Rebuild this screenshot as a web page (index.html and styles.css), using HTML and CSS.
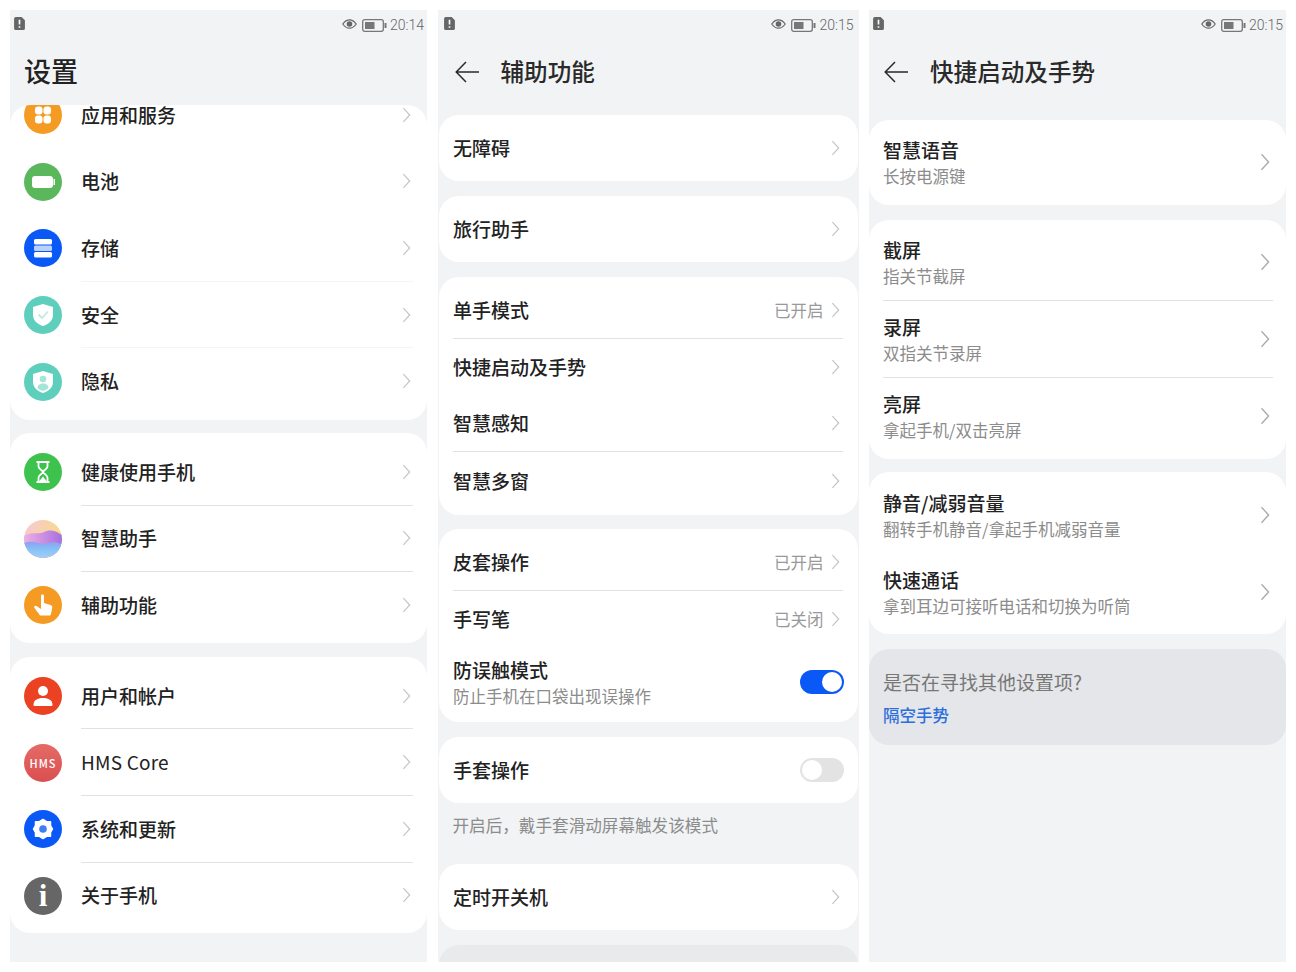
FILE: index.html
```html
<!DOCTYPE html>
<html lang="zh-CN">
<head>
<meta charset="utf-8">
<title>设置</title>
<link rel="stylesheet" href="styles.css">
</head>
<body>
<svg class="defs" width="0" height="0" aria-hidden="true">
  <symbol id="chev" viewBox="0 0 10 18"><path d="M1.5 1.2 8.6 9 1.5 16.8" fill="none" stroke="currentColor" stroke-width="1.3"/></symbol>
  <symbol id="back" viewBox="0 0 24 22"><path d="M24 11H1.2M11 1 1.2 11 11 21" fill="none" stroke="#2a2a2a" stroke-width="1.5"/></symbol>
  <symbol id="notice" viewBox="0 0 10 12"><path d="M1.5 0H7L10 3V10.5A1.5 1.5 0 0 1 8.500 12H1.500A1.500 1.500 0 0 1 0 10.500V1.500A1.500 1.500 0 0 1 1.500 0Z" fill="#666"/><path d="M5 2.500V7M5 8.500V10" stroke="#fff" stroke-width="1.500"/></symbol>
  <symbol id="eye" viewBox="0 0 15 10"><path d="M.8 5C3 1.800 5.200.8 7.500.8S12 1.800 14.200 5C12 8.200 9.800 9.200 7.500 9.200S3 8.200.8 5Z" fill="none" stroke="#666" stroke-width="1.200"/><circle cx="7.500" cy="5" r="2.800" fill="#666"/></symbol>
  <symbol id="batt" viewBox="0 0 25 13"><rect x=".7" y=".7" width="20.600" height="11.600" rx="2" fill="none" stroke="#777" stroke-width="1.300"/><rect x="3" y="3" width="9.500" height="7" fill="#777"/><rect x="22.500" y="4" width="2" height="5" fill="#777"/></symbol>
</svg>

<main class="screens">

  <section class="panel">
    <header class="head">
      <div class="status">
        <svg class="st-notice"><use href="#notice"/></svg>
        <span class="st-right">
          <svg class="st-eye"><use href="#eye"/></svg>
          <svg class="st-batt"><use href="#batt"/></svg>
          <span class="st-time">20:14</span>
        </span>
      </div>
      <div class="titlebar"><h1 class="title-main">设置</h1></div>
    </header>
    <div class="scroll scroll-round">
      <div class="list list-scrolled">
        <div class="card card-settings gap-13">
          <div class="row row-icon"><svg class="ico" viewBox="0 0 38 38"><circle cx="19" cy="19" r="19" fill="#f59b23"/><g fill="#fff"><rect x="11" y="10.500" width="7.500" height="8" rx="3"/><rect x="19.500" y="10.500" width="7.500" height="8" rx="3"/><rect x="11" y="19.500" width="7.500" height="8" rx="3"/><rect x="19.500" y="19.500" width="7.500" height="8" rx="3"/></g></svg><div class="main main-plain"><span class="label">应用和服务</span><svg class="chev"><use href="#chev"/></svg></div></div>
          <div class="row row-icon"><svg class="ico" viewBox="0 0 38 38"><circle cx="19" cy="19" r="19" fill="#5bb75c"/><rect x="8" y="13" width="21" height="12" rx="3" fill="#fff"/><rect x="29.500" y="16" width="1.500" height="6" fill="#fff"/></svg><div class="main main-plain"><span class="label">电池</span><svg class="chev"><use href="#chev"/></svg></div></div>
          <div class="row row-icon"><svg class="ico" viewBox="0 0 38 38"><circle cx="19" cy="19" r="19" fill="#0a59f7"/><rect x="10" y="10" width="18" height="5.500" rx="1.500" fill="#fff"/><rect x="10" y="16.500" width="18" height="5.500" rx="1.500" fill="#b9d2fb"/><rect x="10" y="23" width="18" height="5.500" rx="1.500" fill="#fff"/></svg><div class="main main-faint"><span class="label">存储</span><svg class="chev"><use href="#chev"/></svg></div></div>
          <div class="row row-icon"><svg class="ico" viewBox="0 0 38 38"><circle cx="19" cy="19" r="19" fill="#5fcfbd"/><path d="M19 8 29 11V19C29 24 25 28 19 30 13 28 9 24 9 19V11Z" fill="#fff"/><path d="M14.500 18.500 18 22 24 15.500" fill="none" stroke="#bfe9e1" stroke-width="1.800"/></svg><div class="main main-faint"><span class="label">安全</span><svg class="chev"><use href="#chev"/></svg></div></div>
          <div class="row row-icon"><svg class="ico" viewBox="0 0 38 38"><circle cx="19" cy="19" r="19" fill="#5fcfbd"/><path d="M19 8 29 11V19C29 24 25 28 19 30 13 28 9 24 9 19V11Z" fill="#fff"/><circle cx="19" cy="16" r="3.300" fill="#a5e4d9"/><path d="M13.500 25C14 21.500 16 20.500 19 20.500S24 21.500 24.500 25C22.500 26.800 20.500 27.500 19 28 17.500 27.500 15.500 26.800 13.500 25Z" fill="#a5e4d9"/></svg><div class="main main-plain"><span class="label">隐私</span><svg class="chev"><use href="#chev"/></svg></div></div>
        </div>
        <div class="card card-settings card-low gap-14">
          <div class="row row-icon"><svg class="ico" viewBox="0 0 38 38"><circle cx="19" cy="19" r="19" fill="#3dc24e"/><path d="M12.500 9H25.500M12.500 29H25.500M14.500 9.500V13.500C14.500 16 19 17.500 19 19S14.500 22 14.500 24.500V28.500M23.500 9.500V13.500C23.500 16 19 17.500 19 19S23.500 22 23.500 24.500V28.500" fill="none" stroke="#fff" stroke-width="1.800"/><path d="M15.500 28 19 23.500 22.500 28Z" fill="#fff"/></svg><div class="main main-line"><span class="label">健康使用手机</span><svg class="chev"><use href="#chev"/></svg></div></div>
          <div class="row row-icon"><svg class="ico" viewBox="0 0 38 38"><defs><linearGradient id="as-a" x1="0" y1="0" x2="1" y2="0.300"><stop offset="0" stop-color="#f6c9d6"/><stop offset="1" stop-color="#f8d98a"/></linearGradient><linearGradient id="as-b" x1="0" y1="0" x2="1" y2="0"><stop offset="0" stop-color="#eeb0e2"/><stop offset="1" stop-color="#a86fe0"/></linearGradient><linearGradient id="as-c" x1="0" y1="0" x2="0" y2="1"><stop offset="0" stop-color="#8f9ff0"/><stop offset=".5" stop-color="#85c4f6"/><stop offset="1" stop-color="#a5cdf5"/></linearGradient><clipPath id="as-clip"><circle cx="19" cy="19" r="19"/></clipPath></defs><g clip-path="url(#as-clip)"><rect width="38" height="38" fill="url(#as-a)"/><path d="M0 16C8 11 13 15 20 12S32 11 38 15V38H0Z" fill="url(#as-b)"/><path d="M0 23C10 19 16 26 25 23S34 25 38 23V38H0Z" fill="url(#as-c)"/></g></svg><div class="main main-line"><span class="label">智慧助手</span><svg class="chev"><use href="#chev"/></svg></div></div>
          <div class="row row-icon"><svg class="ico" viewBox="0 0 38 38"><circle cx="19" cy="19" r="19" fill="#f59b23"/><path d="M17 9.500C17 8 20 8 20 9.500V17L26.500 19C28 19.500 28.500 20.500 28.200 22L27 28C26.800 29 26 29.500 25 29.500H17C16 29.500 15.500 29 15 28L10.500 22C9.500 20.500 11 19 12.500 20L17 23Z" fill="#fff"/></svg><div class="main main-plain"><span class="label">辅助功能</span><svg class="chev"><use href="#chev"/></svg></div></div>
        </div>
        <div class="card card-settings card-low">
          <div class="row row-icon"><svg class="ico" viewBox="0 0 38 38"><circle cx="19" cy="19" r="19" fill="#eb4223"/><circle cx="19" cy="14" r="5" fill="#fff"/><path d="M9.500 28C9.500 23 13.500 21 19 21S28.500 23 28.500 28C28.500 28.700 28 29 27.500 29H10.500C10 29 9.500 28.700 9.500 28Z" fill="#fff"/></svg><div class="main main-line"><span class="label">用户和帐户</span><svg class="chev"><use href="#chev"/></svg></div></div>
          <div class="row row-icon"><span class="ico ico-hms">HMS</span><div class="main main-line"><span class="label label-latin">HMS Core</span><svg class="chev"><use href="#chev"/></svg></div></div>
          <div class="row row-icon"><svg class="ico" viewBox="0 0 38 38"><circle cx="19" cy="19" r="19" fill="#0a59f7"/><path d="M19 9.500 23 11.800H26.500V15.500L28.500 19 26.500 22.500V26.200H23L19 28.500 15 26.200H11.500V22.500L9.500 19 11.500 15.500V11.800H15Z" fill="#fff" stroke="#fff" stroke-width="1.500" stroke-linejoin="round"/><circle cx="19" cy="19" r="3.800" fill="#3f7fee"/></svg><div class="main main-line"><span class="label">系统和更新</span><svg class="chev"><use href="#chev"/></svg></div></div>
          <div class="row row-icon"><span class="ico ico-info">i</span><div class="main main-plain"><span class="label">关于手机</span><svg class="chev"><use href="#chev"/></svg></div></div>
        </div>
      </div>
    </div>
  </section>

  <section class="panel panel-mid">
    <header class="head">
      <div class="status">
        <svg class="st-notice"><use href="#notice"/></svg>
        <span class="st-right">
          <svg class="st-eye"><use href="#eye"/></svg>
          <svg class="st-batt"><use href="#batt"/></svg>
          <span class="st-time">20:15</span>
        </span>
      </div>
      <div class="titlebar"><svg class="back"><use href="#back"/></svg><h1 class="title-sub">辅助功能</h1></div>
    </header>
    <div class="scroll">
      <div class="list list-mid">
        <div class="card card-inset"><div class="row row-one row-solo"><span class="label">无障碍</span><svg class="chev"><use href="#chev"/></svg></div></div>
        <div class="card card-inset"><div class="row row-one row-solo"><span class="label">旅行助手</span><svg class="chev"><use href="#chev"/></svg></div></div>
        <div class="card card-inset card-pad gap-14">
          <div class="row row-one row-div"><span class="label">单手模式</span><span class="value">已开启</span><svg class="chev"><use href="#chev"/></svg></div>
          <div class="row row-one"><span class="label">快捷启动及手势</span><svg class="chev"><use href="#chev"/></svg></div>
          <div class="row row-one row-div"><span class="label">智慧感知</span><svg class="chev"><use href="#chev"/></svg></div>
          <div class="row row-one"><span class="label">智慧多窗</span><svg class="chev"><use href="#chev"/></svg></div>
        </div>
        <div class="card card-inset card-pad-top">
          <div class="row row-one row-div"><span class="label">皮套操作</span><span class="value">已开启</span><svg class="chev"><use href="#chev"/></svg></div>
          <div class="row row-one"><span class="label">手写笔</span><span class="value">已关闭</span><svg class="chev"><use href="#chev"/></svg></div>
          <div class="row row-toggle"><div class="text text-mid"><div class="label">防误触模式</div><div class="sub">防止手机在口袋出现误操作</div></div><span class="toggle toggle-on"></span></div>
        </div>
        <div class="card card-inset no-gap"><div class="row row-one row-solo"><span class="label">手套操作</span><span class="toggle toggle-off"></span></div></div>
        <p class="note">开启后，戴手套滑动屏幕触发该模式</p>
        <div class="card card-inset"><div class="row row-one row-solo"><span class="label">定时开关机</span><svg class="chev"><use href="#chev"/></svg></div></div>
        <div class="card card-inset card-grey"></div>
      </div>
    </div>
  </section>

  <section class="panel panel-right">
    <header class="head">
      <div class="status">
        <svg class="st-notice"><use href="#notice"/></svg>
        <span class="st-right">
          <svg class="st-eye"><use href="#eye"/></svg>
          <svg class="st-batt"><use href="#batt"/></svg>
          <span class="st-time">20:15</span>
        </span>
      </div>
      <div class="titlebar"><svg class="back"><use href="#back"/></svg><h1 class="title-sub">快捷启动及手势</h1></div>
    </header>
    <div class="scroll">
      <div class="list list-right">
        <div class="card card-pad-4">
          <div class="row row-two"><div class="text"><div class="label">智慧语音</div><div class="sub">长按电源键</div></div><svg class="chev chev-big"><use href="#chev"/></svg></div>
        </div>
        <div class="card card-pad-5 gap-13">
          <div class="row row-two row-div"><div class="text"><div class="label">截屏</div><div class="sub">指关节截屏</div></div><svg class="chev chev-big"><use href="#chev"/></svg></div>
          <div class="row row-two row-div"><div class="text"><div class="label">录屏</div><div class="sub">双指关节录屏</div></div><svg class="chev chev-big"><use href="#chev"/></svg></div>
          <div class="row row-two"><div class="text"><div class="label">亮屏</div><div class="sub">拿起手机/双击亮屏</div></div><svg class="chev chev-big"><use href="#chev"/></svg></div>
        </div>
        <div class="card card-pad-5b">
          <div class="row row-two"><div class="text"><div class="label">静音/减弱音量</div><div class="sub">翻转手机静音/拿起手机减弱音量</div></div><svg class="chev chev-big"><use href="#chev"/></svg></div>
          <div class="row row-two"><div class="text"><div class="label">快速通话</div><div class="sub">拿到耳边可接听电话和切换为听筒</div></div><svg class="chev chev-big"><use href="#chev"/></svg></div>
        </div>
        <div class="card card-promo">
          <div class="promo-title">是否在寻找其他设置项?</div>
          <div class="promo-link">隔空手势</div>
        </div>
      </div>
    </div>
  </section>

</main>
</body>
</html>
```

FILE: styles.css
```css
* { box-sizing: border-box; }

html, body {
  margin: 0;
  height: 100%;
  background: #fff;
}

body {
  font-family: "Noto Sans CJK SC", "Noto Sans", sans-serif;
  color: #222;
  overflow: hidden;
}

.defs { position: absolute; }

.screens {
  display: grid;
  grid-template-columns: 417px 421px 417px;
  column-gap: 10.5px;
  height: 972px;
  padding: 10px;
}

.panel {
  display: flex;
  flex-direction: column;
  min-height: 0;
  background: #f1f3f5;
  overflow: hidden;
}

.head { flex: none; height: 95px; }

.status {
  display: flex;
  align-items: center;
  justify-content: space-between;
  height: 28px;
  padding: 2px 3px 0 4px;
}

.panel-mid .status { padding: 2px 5px 0 6px; }

.st-notice { width: 11px; height: 13px; margin-top: -3px; }
.st-right { display: flex; align-items: center; }
.st-eye { width: 15px; height: 10px; margin: -2px 0 0 0; }
.st-batt { width: 25px; height: 13px; margin-left: 5px; }
.st-time {
  margin-left: 3px;
  font-family: "Roboto", sans-serif;
  font-size: 14px;
  font-weight: 300;
  line-height: 16px;
  color: #666;
}

.titlebar {
  display: flex;
  align-items: center;
  height: 65px;
  padding-left: 17px;
}

.panel-right .titlebar { padding-left: 15px; }

.back { width: 24px; height: 22px; margin: 3px 22px 0 0; }

.title-main {
  margin: 0 0 0 -3px;
  font-size: 27px;
  font-weight: 500;
  line-height: 36px;
  color: #222;
}

.title-sub {
  margin: 0;
  font-size: 23.600px;
  font-weight: 500;
  line-height: 32px;
  color: #2a2a2a;
}

.scroll { flex: 1; min-height: 0; overflow: hidden; }
.scroll-round { border-radius: 20px 20px 0 0; }

.list-scrolled { margin-top: -28px; }
.list-mid { padding-top: 10px; }
.list-right { padding-top: 15px; }

.card {
  background: #fff;
  border-radius: 20px;
  margin-bottom: 15px;
}

.gap-13 { margin-bottom: 13px; }
.gap-14 { margin-bottom: 14px; }
.no-gap { margin-bottom: 0; }

.card-settings { padding: 5px 0; }
.card-low { padding: 6px 0 4px; }
.card-inset { margin-left: 1px; margin-right: 1px; }
.card-pad { padding: 5px 0 5.800px; }
.card-pad-top { padding: 5px 0; }
.card-pad-4 { padding: 4px 0; }
.card-pad-5 { padding: 5px 0 4px; }
.card-pad-5b { padding: 5px 0 4px; }
.card-grey { height: 96px; background: #e8eaec; }

.row { display: flex; align-items: center; }

.row-icon { height: 66.600px; padding: 0 14px; }
.row-icon .label { line-height: 20px; }

.ico { flex: none; width: 38px; height: 38px; margin-right: 19px; }

.ico-hms {
  display: flex;
  align-items: center;
  justify-content: center;
  border-radius: 50%;
  background: linear-gradient(#e56b66, #d94f4f);
  color: #fff;
  font-size: 11px;
  font-weight: 500;
  letter-spacing: 1px;
}

.ico-info {
  display: flex;
  align-items: center;
  justify-content: center;
  border-radius: 50%;
  background: #666;
  color: #fff;
  font-family: "Liberation Serif", serif;
  font-size: 31px;
  font-weight: 700;
}

.main {
  flex: 1;
  display: flex;
  align-items: center;
  justify-content: space-between;
  height: 100%;
  padding-right: 2px;
  border-bottom: 1px solid transparent;
}

.main-line { border-bottom-color: #e2e2e2; }
.main-faint { border-bottom-color: #f5f5f5; }

.label {
  font-size: 19px;
  font-weight: 500;
  line-height: 26px;
  color: #222;
}

.label-latin { font-weight: 400; letter-spacing: .2px; }

.chev {
  flex: none;
  width: 9px;
  height: 16px;
  color: #c4c4c4;
}

.chev-big { width: 10px; height: 18px; color: #a8a8a8; }

.row-one,
.row-toggle,
.row-two {
  margin: 0 15px 0 14.500px;
  justify-content: space-between;
}

.row-one { height: 56.800px; padding-right: 3px; }
.row-one .value { margin-left: auto; margin-right: 7px; }
.row-solo { height: 66px; }
.row-div { border-bottom: 1px solid #e2e2e2; }
.row-toggle { height: 69.400px; margin-right: 14px; }

.row-two {
  height: 76.670px;
  margin: 0 13px 0 14px;
  padding-right: 3px;
}

.text { padding-top: 2px; }
.text-mid { padding-top: 1px; }

.sub {
  font-size: 16.500px;
  line-height: 26px;
  color: #8c8c8c;
}

.value {
  font-size: 16.500px;
  line-height: 24px;
  color: #999;
}

.note {
  margin: 0;
  padding: 10px 15px 27px;
  font-size: 16.600px;
  line-height: 24px;
  color: #8c8c8c;
}

.toggle {
  position: relative;
  flex: none;
  width: 44px;
  height: 24px;
  border-radius: 12px;
  background: #e3e3e3;
}

.toggle-off { margin-right: -4px; }

.toggle::after {
  content: "";
  position: absolute;
  top: 2px;
  left: 2px;
  width: 20px;
  height: 20px;
  border-radius: 50%;
  background: #fff;
}

.toggle-on { background: #0a59f7; }
.toggle-on::after { left: 22px; }

.card-promo {
  height: 96px;
  padding: 20px 14px 0;
  background: #e4e6e9;
}

.promo-title {
  font-size: 19px;
  line-height: 26px;
  color: #777;
}

.promo-link {
  margin-top: 8px;
  font-size: 16.500px;
  font-weight: 500;
  line-height: 24px;
  color: #2b6fdc;
}
```
